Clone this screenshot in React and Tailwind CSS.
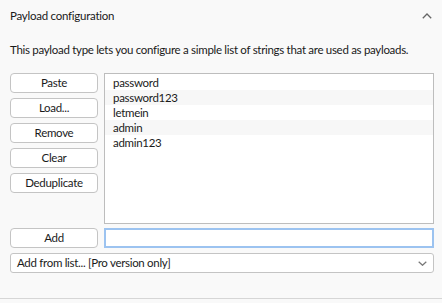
import React from "react";

const btn =
  "h-[20px] w-[88px] rounded-[4px] border border-[#c4c4c4] bg-white leading-none text-[#1a1a1a] flex items-center justify-center";

export default function App() {
  const items = ["password", "password123", "letmein", "admin", "admin123"];
  return (
    <div
      className="w-[442px] h-[303px] bg-[#f9f9f9] text-[#1a1a1a] text-[11.5px] tracking-[-0.3px] flex flex-col"
      style={{ fontFamily: 'Lato, sans-serif' }}
    >
      <div className="h-[32px] flex items-center justify-between pl-[10px] pr-[10px]">
        <span className="tracking-[-0.25px]">Payload configuration</span>
        <svg width="10" height="6" viewBox="0 0 10 6" className="mb-[1px]">
          <path d="M0.8 5.2 L5 1 L9.2 5.2" fill="none" stroke="#666" strokeWidth="1.3" />
        </svg>
      </div>
      <div className="pl-[10px] mt-[10px] h-[16px] leading-[16px] whitespace-nowrap">
        This payload type lets you configure a simple list of strings that are used as payloads.
      </div>
      <div className="flex gap-[6px] pl-[10px] pr-[8px] mt-[15px]">
        <div className="flex flex-col gap-[5px] w-[88px]">
          <button className={btn}>Paste</button>
          <button className={btn}>Load...</button>
          <button className={btn}>Remove</button>
          <button className={btn}>Clear</button>
          <button className={btn}>Deduplicate</button>
        </div>
        <div className="flex-1 h-[151px] border border-[#bdbdbd] bg-white pt-[1px]">
          {items.map((t, i) => (
            <div
              key={t}
              className={`h-[15px] leading-[15px] pl-[8px] ${i % 2 === 1 ? "bg-[#f7f7f7]" : "bg-white"}`}
            >
              {t}
            </div>
          ))}
        </div>
      </div>
      <div className="flex gap-[6px] pl-[10px] pr-[8px] mt-[4px]">
        <button className={btn}>Add</button>
        <div className="flex-1 h-[20px] border-2 border-[#9cc3f0] bg-white" />
      </div>
      <div className="pl-[10px] pr-[8px] mt-[5px]">
        <div className="h-[20px] rounded-[3px] border border-[#c4c4c4] bg-white flex items-center justify-between pl-[6px] pr-[6px]">
          <span>Add from list... [Pro version only]</span>
          <svg width="9" height="5" viewBox="0 0 9 5">
            <path d="M0.7 0.7 L4.5 4.3 L8.3 0.7" fill="none" stroke="#777" strokeWidth="1.2" />
          </svg>
        </div>
      </div>
      <div className="flex-1" />
      <div className="h-[5px] border-t border-[#d6d6d6]" />
    </div>
  );
}
